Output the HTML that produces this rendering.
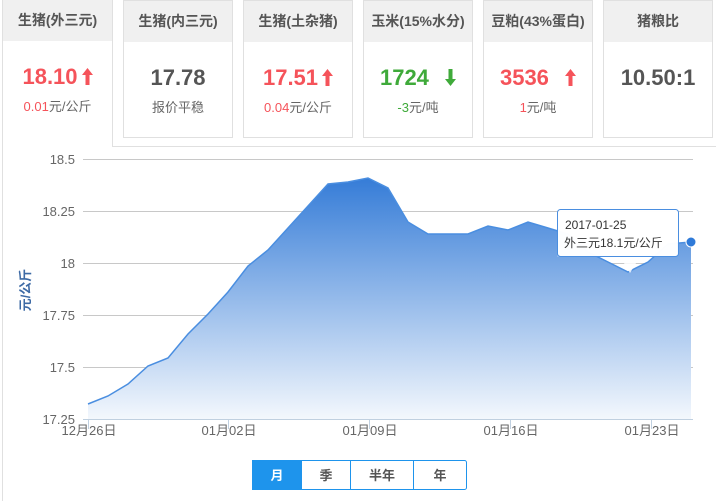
<!DOCTYPE html>
<html><head><meta charset="utf-8"><style>
body{margin:0;width:716px;height:501px;background:#fff;font-family:"Liberation Sans","Noto Sans CJK SC",sans-serif;position:relative;overflow:hidden}
.card{position:absolute;top:0;width:108px;height:136px;border:1px solid #e0e0e0;background:#fff;text-align:center}
.card .h{height:41px;background:#f0f0f0;line-height:41px;font-size:14px;font-weight:bold;color:#555}
.card .v{margin-top:22px;font-size:22px;font-weight:bold;line-height:28px}
.card .s{margin-top:5px;font-size:13px;color:#666}
.r{color:#f5535a}.g{color:#3faa3a}.k{color:#555}
.ar{display:inline-block;vertical-align:-1px;margin-left:4px}
</style></head><body>
<div style="position:absolute;left:2px;top:0;width:1px;height:501px;background:#e0e0e0"></div>
<div style="position:absolute;left:112px;top:146px;width:604px;height:1px;background:#e0e0e0"></div>
<div style="position:absolute;left:112px;top:0;width:1px;height:147px;background:#e0e0e0"></div>
<div class="card" style="left:3px;width:109px;height:147px;border:none"><div class="h">生猪(外三元)</div><div class="v r">18.10<svg class="ar" width="11" height="17" viewBox="0 0 11 17"><path d="M5.5,0 L11,7 H7.5 V17 H3.5 V7 H0Z" fill="#f5535a"/></svg></div><div class="s"><span class="r">0.01</span>元/公斤</div></div>
<div class="card" style="left:123px"><div class="h">生猪(内三元)</div><div class="v k">17.78</div><div class="s">报价平稳</div></div>
<div class="card" style="left:243px"><div class="h">生猪(土杂猪)</div><div class="v r">17.51<svg class="ar" width="11" height="17" viewBox="0 0 11 17"><path d="M5.5,0 L11,7 H7.5 V17 H3.5 V7 H0Z" fill="#f5535a"/></svg></div><div class="s"><span class="r">0.04</span>元/公斤</div></div>
<div class="card" style="left:363px"><div class="h">玉米(15%水分)</div><div class="v g">1724 <svg class="ar" style="margin-left:10px" width="11" height="17" viewBox="0 0 11 17"><path d="M5.5,17 L11,10 H7.5 V0 H3.5 V10 H0Z" fill="#3faa3a"/></svg></div><div class="s"><span class="g">-3</span>元/吨</div></div>
<div class="card" style="left:483px"><div class="h">豆粕(43%蛋白)</div><div class="v r">3536 <svg class="ar" style="margin-left:10px" width="11" height="17" viewBox="0 0 11 17"><path d="M5.5,0 L11,7 H7.5 V17 H3.5 V7 H0Z" fill="#f5535a"/></svg></div><div class="s"><span class="r">1</span>元/吨</div></div>
<div class="card" style="left:603px"><div class="h">猪粮比</div><div class="v k">10.50:1</div></div>
<svg style="position:absolute;left:0;top:0" width="716" height="501">
<defs><linearGradient id="g2" x1="0" y1="170" x2="0" y2="420" gradientUnits="userSpaceOnUse"><stop offset="0" stop-color="#2f78d6"/><stop offset="1" stop-color="#f4f8fd"/></linearGradient></defs>
<g stroke="#c8c8c8" stroke-width="1">
<line x1="83" y1="159.5" x2="693" y2="159.5"/><line x1="83" y1="211.5" x2="693" y2="211.5"/><line x1="83" y1="263.5" x2="693" y2="263.5"/><line x1="83" y1="315.5" x2="693" y2="315.5"/><line x1="83" y1="367.5" x2="693" y2="367.5"/></g>
<path d="M88,404 L108,396 128,384 148,366 168,358 188,334 208,314 228,292 248,266 268,250 288,228 308,206 328,184 348,182 368,178 388,188 408,222 428,234 448,234 468,234 488,226 508,230 528,222 548,228 568,234 588,252 608,262 628,272 648,262 668,244 691,242 L691,419 L88,419Z" fill="url(#g2)"/>
<path d="M88,404 L108,396 128,384 148,366 168,358 188,334 208,314 228,292 248,266 268,250 288,228 308,206 328,184 348,182 368,178 388,188 408,222 428,234 448,234 468,234 488,226 508,230 528,222 548,228 568,234 588,252 608,262 628,272 648,262 668,244 691,242" fill="none" stroke="#4a8ee0" stroke-width="1.5"/>
<line x1="83" y1="419.5" x2="693" y2="419.5" stroke="#c0d0e0"/>
<g stroke="#c0d0e0"><line x1="88.5" y1="419" x2="88.5" y2="429"/><line x1="228.5" y1="419" x2="228.5" y2="429"/><line x1="369.5" y1="419" x2="369.5" y2="429"/><line x1="510.5" y1="419" x2="510.5" y2="429"/><line x1="651.5" y1="419" x2="651.5" y2="429"/></g>
<g font-size="13" fill="#666" text-anchor="end" font-family="Liberation Sans,Noto Sans CJK SC,sans-serif">
<text x="75" y="164">18.5</text><text x="75" y="216">18.25</text><text x="75" y="268">18</text><text x="75" y="320">17.75</text><text x="75" y="372">17.5</text><text x="75" y="424">17.25</text></g>
<g font-size="13" fill="#666" text-anchor="middle" font-family="Liberation Sans,Noto Sans CJK SC,sans-serif">
<text x="89" y="435">12月26日</text><text x="229" y="435">01月02日</text><text x="370" y="435">01月09日</text><text x="511" y="435">01月16日</text><text x="652" y="435">01月23日</text></g>
<text transform="translate(30,290) rotate(-90)" text-anchor="middle" font-size="13" fill="#3d6aa5" font-weight="bold" font-family="Liberation Sans,Noto Sans CJK SC,sans-serif">元/公斤</text>
<path d="M557.5,210.5 H677.5 V256.5 H640 L630,273 L620,256.5 H557.5Z" fill="#fff" fill-opacity="0.85"/>
<rect x="557.5" y="209.5" width="121" height="47" rx="3" fill="#fff" fill-opacity="0.88" stroke="#4a8ee0"/>
<text x="565" y="229" font-size="12" fill="#333" font-family="Liberation Sans,Noto Sans CJK SC,sans-serif">2017-01-25</text>
<text x="564" y="247" font-size="12" fill="#333" font-family="Liberation Sans,Noto Sans CJK SC,sans-serif">外三元18.1元/公斤</text>
<circle cx="691" cy="242" r="5" fill="#2f7ad8" stroke="#fff" stroke-width="1"/>
<rect x="252.5" y="460.5" width="214" height="29" rx="2" fill="#fff" stroke="#1e94ec"/>
<rect x="252" y="460" width="50" height="30" fill="#1e94ec"/>
<g stroke="#1e94ec"><line x1="350.5" y1="460" x2="350.5" y2="490"/><line x1="413.5" y1="460" x2="413.5" y2="490"/></g>
<g font-size="13" font-weight="bold" text-anchor="middle" font-family="Liberation Sans,Noto Sans CJK SC,sans-serif" fill="#555">
<text x="277" y="480" fill="#fff">月</text><text x="326" y="480">季</text><text x="382" y="480">半年</text><text x="440" y="480">年</text></g>
</svg>
</body></html>
